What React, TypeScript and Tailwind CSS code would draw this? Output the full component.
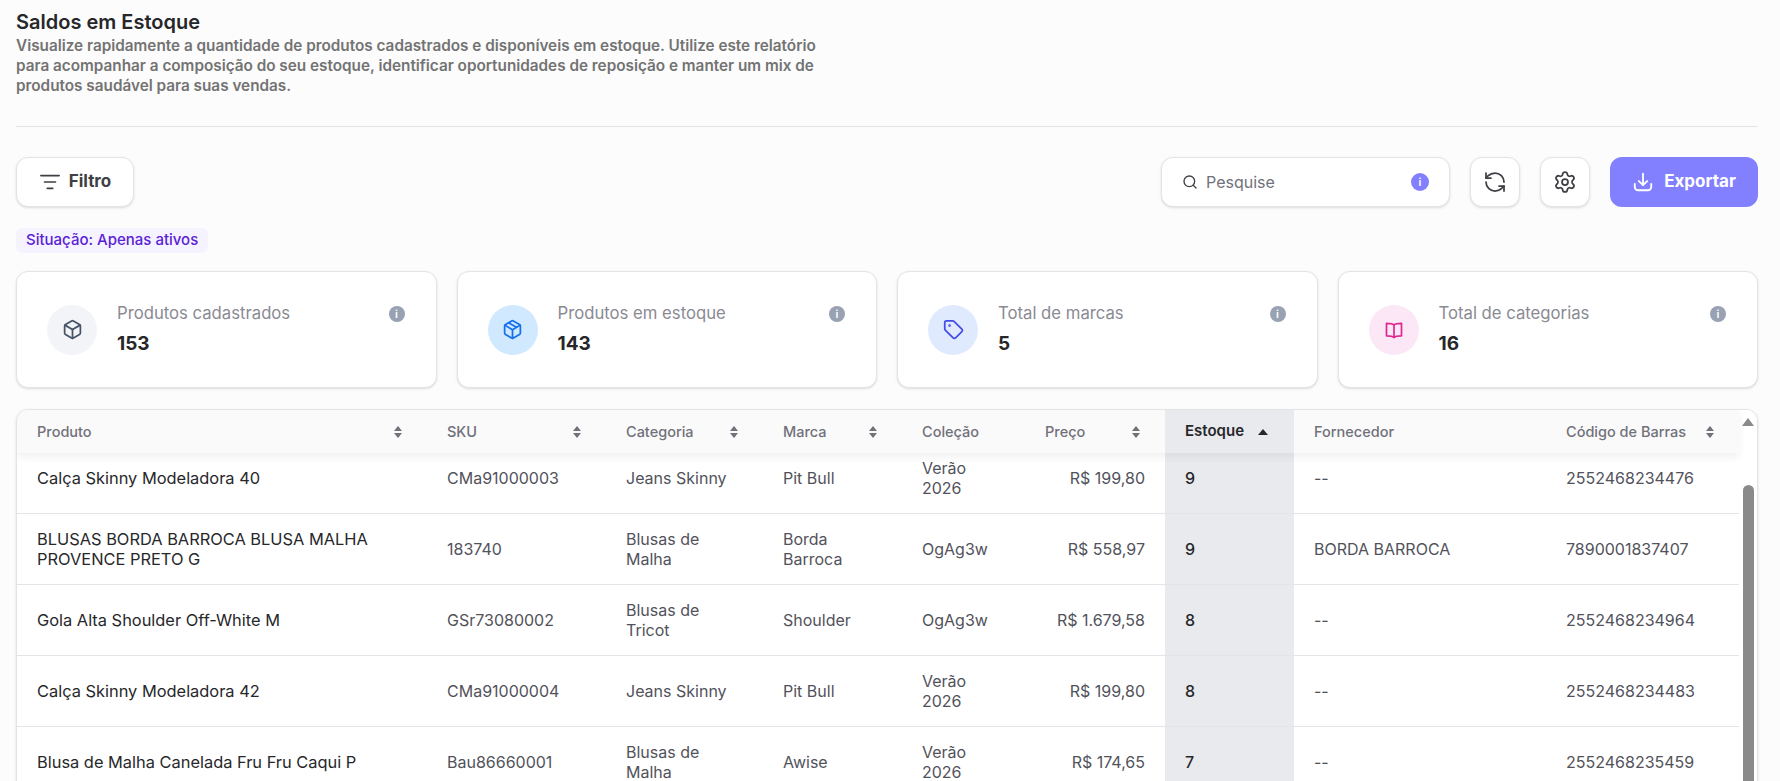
import { ListFilter, RefreshCcw, Search, Settings } from "lucide-react";
import { LuBox, LuPackage, LuTag } from "react-icons/lu";
import type { ReactNode } from "react";

const font = "font-['Inter',sans-serif]";

const gridCols =
  "grid grid-cols-[410px_179px_157px_139px_123px_140px_129px_252px_193px]";

function BookIcon() {
  return (
    <svg width="20" height="20" viewBox="0 0 24 24" fill="none" stroke="currentColor" strokeWidth="2" strokeLinejoin="round" strokeLinecap="round" className="text-[#dd2590]">
      <path d="M12 6C10.5 4.6 8 4 3 4v15c5 0 7.500.5 9 2 1.500-1.500 4-2 9-2V4c-5 0-7.500.6-9 2z" />
      <path d="M12 6v15" />
    </svg>
  );
}

function TrayIcon() {
  return (
    <svg width="22" height="22" viewBox="0 0 24 24" fill="none" stroke="currentColor" strokeWidth="2" strokeLinecap="round" strokeLinejoin="round">
      <path d="M12 3v12" />
      <path d="m7.500 11 4.500 4.500 4.500-4.500" />
      <path d="M3 14v3.500A3.500 3.500 0 0 0 6.500 21h11a3.500 3.500 0 0 0 3.500-3.500V14" />
    </svg>
  );
}

const stats = [
  { label: "Produtos cadastrados", value: "153", circle: "bg-[#f2f4f7]", icon: <LuBox className="text-[#475467]" size={21} /> },
  { label: "Produtos em estoque", value: "143", circle: "bg-[#d1e9ff]", icon: <LuPackage className="text-[#1570ef]" size={21} /> },
  { label: "Total de marcas", value: "5", circle: "bg-[#e0eaff]", icon: <LuTag className="text-[#444ce7]" size={21} /> },
  { label: "Total de categorias", value: "16", circle: "bg-[#fce7f6]", icon: <BookIcon /> },
];

const rows = [
  ["Calça Skinny Modeladora 40", "CMa91000003", "Jeans Skinny", "Pit Bull", "Verão 2026", "R$ 199,80", "9", "--", "2552468234476"],
  ["BLUSAS BORDA BARROCA BLUSA MALHA PROVENCE PRETO G", "183740", "Blusas de Malha", "Borda Barroca", "OgAg3w", "R$ 558,97", "9", "BORDA BARROCA", "7890001837407"],
  ["Gola Alta Shoulder Off-White M", "GSr73080002", "Blusas de Tricot", "Shoulder", "OgAg3w", "R$ 1.679,58", "8", "--", "2552468234964"],
  ["Calça Skinny Modeladora 42", "CMa91000004", "Jeans Skinny", "Pit Bull", "Verão 2026", "R$ 199,80", "8", "--", "2552468234483"],
  ["Blusa de Malha Canelada Fru Fru Caqui P", "Bau86660001", "Blusas de Malha", "Awise", "Verão 2026", "R$ 174,65", "7", "--", "2552468235459"],
];

function InfoDot({ className }: { className: string }) {
  return (
    <span className={`flex items-center justify-center rounded-full text-[11px] leading-none font-semibold text-white ${className}`}>
      i
    </span>
  );
}

function SortIcon() {
  return (
    <svg width="10" height="14" viewBox="0 0 10 14" className="text-[#71717a]">
      <path d="M5 1 9 6H1z" fill="currentColor" />
      <path d="M5 13 1 8h8z" fill="currentColor" />
    </svg>
  );
}

function HeaderCell({ children, sort = true }: { children: ReactNode; sort?: boolean }) {
  return (
    <div className="flex items-center justify-between pr-[24px] pl-5 text-[14.5px] font-medium text-[#71717a]">
      <span>{children}</span>
      {sort && <SortIcon />}
    </div>
  );
}

export default function App() {
  return (
    <div className={`${font} h-[781px] overflow-hidden bg-[#fcfcfc] pt-[10px] pr-[22px] pl-4 text-[#27272a]`}>
      <h1 className="text-xl leading-[24px] font-semibold text-[#27272a]">Saldos em Estoque</h1>
      <p className="mt-[2px] w-[824px] text-[15.3px] leading-[20px] font-semibold text-[#737373]">
        Visualize rapidamente a quantidade de produtos cadastrados e disponíveis em estoque. Utilize este relatório para acompanhar a composição do seu estoque, identificar oportunidades de reposição e manter um mix de produtos saudável para suas vendas.
      </p>
      <div className="mt-[30px] h-px bg-[#e4e4e7]" />

      <div className="mt-[30px] flex items-center justify-between">
        <button className="flex h-[50px] w-[118px] items-center justify-center gap-2 rounded-xl border border-[#e4e4e7] bg-white text-[17px] font-bold text-[#3f3f46] shadow-sm">
          <ListFilter size={22} strokeWidth={1.75} />
          Filtro
        </button>
        <div className="flex items-center gap-5">
          <div className="flex h-[50px] w-[289px] items-center gap-2 rounded-xl border border-[#e4e4e7] bg-white pr-5 pl-5 shadow-sm">
            <Search size={16} className="text-[#3f3f46]" />
            <span className="flex-1 text-base text-[#71717a]">Pesquise</span>
            <InfoDot className="h-[18px] w-[18px] bg-[#8280ff]" />
          </div>
          <button className="flex h-[50px] w-[50px] items-center justify-center rounded-xl border border-[#e4e4e7] bg-white text-[#3f3f46] shadow-sm">
            <RefreshCcw size={24} strokeWidth={1.75} />
          </button>
          <button className="flex h-[50px] w-[50px] items-center justify-center rounded-xl border border-[#e4e4e7] bg-white text-[#3f3f46] shadow-sm">
            <Settings size={24} strokeWidth={1.75} />
          </button>
          <button className="flex h-[50px] w-[148px] items-center justify-center gap-2.5 rounded-xl bg-[#8280ff] text-[17px] font-bold text-white">
            <TrayIcon />
            Exportar
          </button>
        </div>
      </div>

      <div className="mt-[21px] flex">
        <span className="flex h-[25px] items-center rounded-md bg-[#f5f3ff] px-2.5 text-[15px] font-medium text-[#5b21d6]">
          Situação: Apenas ativos
        </span>
      </div>

      <div className="mt-[18px] grid grid-cols-4 gap-5">
        {stats.map((s) => (
          <div key={s.label} className="flex h-[117px] items-center rounded-xl border border-[#e4e4e7] bg-white pr-[31px] pl-[30px] shadow-sm">
            <div className={`flex h-[50px] w-[50px] shrink-0 items-center justify-center rounded-full ${s.circle}`}>{s.icon}</div>
            <div className="ml-5 flex-1">
              <div className="text-[16.7px] leading-[20px] text-[#8a8a93]">{s.label}</div>
              <div className="mt-[9px] text-[19px] leading-[24px] font-bold text-[#27272a]">{s.value}</div>
            </div>
            <InfoDot className="-mt-[31px] h-4 w-4 bg-[#98a2b3]" />
          </div>
        ))}
      </div>

      <div className="mt-[21px] flex overflow-hidden rounded-t-xl border border-[#e4e4e7] bg-white shadow-sm">
        <div className="w-[1722px] shrink-0">
          <div className={`${gridCols} relative z-10 h-[43px] bg-[#fafafa] shadow-[0_4px_8px_rgba(0,0,0,0.06)]`}>
            <HeaderCell>Produto</HeaderCell>
            <HeaderCell>SKU</HeaderCell>
            <HeaderCell>Categoria</HeaderCell>
            <HeaderCell>Marca</HeaderCell>
            <HeaderCell sort={false}>Coleção</HeaderCell>
            <HeaderCell>Preço</HeaderCell>
            <div className="flex items-center gap-3.5 bg-[#e9eaee] pl-5 text-[15px] font-semibold text-[#27272a]">
              Estoque
              <svg width="10" height="6" viewBox="0 0 10 6"><path d="M5 0 10 6H0z" fill="#27272a" /></svg>
            </div>
            <HeaderCell sort={false}>Fornecedor</HeaderCell>
            <HeaderCell>Código de Barras</HeaderCell>
          </div>
          <div className="-mt-[10px]">
            {rows.map((r, i) => (
              <div key={i} className={`${gridCols} h-[71px] border-b border-[#e4e4e7] text-base leading-[20px] text-[#52525b]`}>
                <div className="flex items-center pr-8 pl-5 text-[16.4px] text-[#27272a]">{r[0]}</div>
                <div className="flex items-center pl-5">{r[1]}</div>
                <div className="flex items-center pr-5 pl-5">{r[2]}</div>
                <div className="flex items-center pr-5 pl-5">{r[3]}</div>
                <div className="flex items-center pr-8 pl-5">{r[4]}</div>
                <div className="flex items-center justify-end pr-5">{r[5]}</div>
                <div className="flex items-center bg-[#e9eaee] pl-5 font-medium text-[#27272a]">{r[6]}</div>
                <div className="flex items-center pl-5">{r[7]}</div>
                <div className="flex items-center pl-5">{r[8]}</div>
              </div>
            ))}
          </div>
        </div>
        <div className="flex w-[18px] shrink-0 flex-col items-center bg-white pt-2">
          <svg width="12" height="8" viewBox="0 0 12 8"><path d="M6 0 12 8H0z" fill="#8a8a8a" /></svg>
          <div className="mt-[59px] h-[400px] w-[11px] rounded-full bg-[#8a8a8a]" />
        </div>
      </div>
    </div>
  );
}
